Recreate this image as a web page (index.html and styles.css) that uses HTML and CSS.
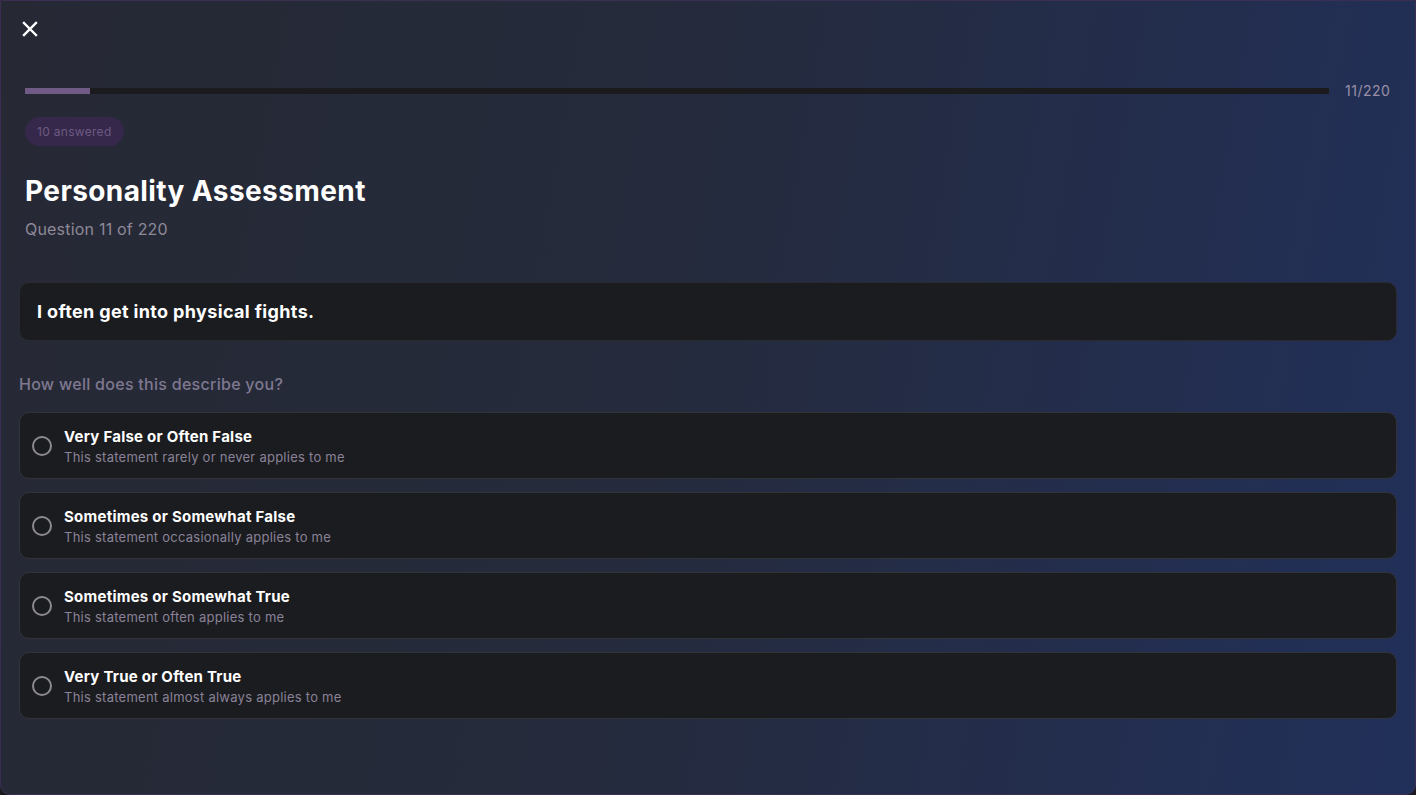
FILE: index.html
```html
<!DOCTYPE html>
<html lang="en">
<head>
<meta charset="utf-8">
<title>Personality Assessment</title>
<link rel="stylesheet" href="styles.css">
</head>
<body>
<div class="window">
  <button class="close" aria-label="Close">
    <svg width="16" height="16" viewBox="0 0 16 16"><path d="M2 2 L14 14 M14 2 L2 14" stroke="#ffffff" stroke-width="2.4" stroke-linecap="square" fill="none"/></svg>
  </button>
  <div class="content">
    <div class="progress-row">
      <div class="track"><div class="fill" style="width:5%"></div></div>
      <span class="count">11/220</span>
    </div>
    <span class="badge">10 answered</span>
    <h1 class="title">Personality Assessment</h1>
    <p class="subtitle">Question 11 of 220</p>
  </div>
  <div class="question">I often get into physical fights.</div>
  <p class="prompt">How well does this describe you?</p>
  <div class="options">
    <label class="option"><span class="radio"></span><span class="text"><span class="opt-title">Very False or Often False</span><span class="opt-desc">This statement rarely or never applies to me</span></span></label>
    <label class="option"><span class="radio"></span><span class="text"><span class="opt-title">Sometimes or Somewhat False</span><span class="opt-desc">This statement occasionally applies to me</span></span></label>
    <label class="option"><span class="radio"></span><span class="text"><span class="opt-title">Sometimes or Somewhat True</span><span class="opt-desc">This statement often applies to me</span></span></label>
    <label class="option"><span class="radio"></span><span class="text"><span class="opt-title">Very True or Often True</span><span class="opt-desc">This statement almost always applies to me</span></span></label>
  </div>
</div>
</body>
</html>
```
FILE: styles.css
```css
* { box-sizing: border-box; }
html, body { margin: 0; padding: 0; height: 100%; }
body {
  font-family: Inter, "Noto Sans", sans-serif;
  background: #1a1a1f;
}
.window {
  height: 795px;
  width: 1416px;
  border: 1px solid #3a2e52;
  border-radius: 0 0 10px 10px;
  background: linear-gradient(100deg, #262934 0%, #252b3c 45%, #232d4c 75%, #21305a 100%);
  padding: 18px 18px 0 18px;
  display: flex;
  flex-direction: column;
}
.close {
  width: 20px; height: 20px;
  padding: 0; margin: 0 0 0 1px;
  background: none; border: 0;
  display: flex; align-items: center; justify-content: center;
}
.content { padding: 0 6px; }
.progress-row {
  margin-top: 43px;
  display: flex;
  align-items: center;
  gap: 16px;
}
.track {
  flex: 1;
  height: 6px;
  background: #1b1b1e;
}
.fill { height: 100%; background: #6f5b85; }
.count {
  font-size: 14px;
  color: #9a8fa8;
  width: 46px;
  flex: none;
  letter-spacing: 0.5px;
}
.badge {
  display: inline-block;
  margin-top: 18px;
  height: 29px;
  line-height: 29px;
  padding: 0 12px;
  border-radius: 15px;
  background: #35284a;
  color: #6e5a84;
  font-size: 12px;
  letter-spacing: 0.3px;
}
.title {
  margin: 28px 0 0 0;
  font-size: 28px;
  font-weight: 700;
  color: #ffffff;
  line-height: 34px;
  letter-spacing: 0.4px;
}
.subtitle {
  margin: 11px 0 0 0;
  font-size: 16px;
  line-height: 20px;
  color: #8e8898;
  letter-spacing: 0.2px;
}
.question {
  margin-top: 43px;
  height: 59px;
  background: #1b1c1f;
  border: 1px solid #2a2b31;
  border-radius: 10px;
  padding: 0 17px;
  display: flex;
  align-items: center;
  font-size: 18px;
  font-weight: 700;
  color: #ffffff;
  letter-spacing: 0.35px;
}
.prompt {
  margin: 33px 0 0 0;
  font-size: 16px;
  font-weight: 500;
  line-height: 20px;
  color: #7f7890;
  letter-spacing: 0.28px;
}
.options {
  margin-top: 18px;
  display: flex;
  flex-direction: column;
  gap: 13px;
}
.option {
  height: 67px;
  background: #1b1c1f;
  border: 1px solid #33343a;
  border-radius: 10px;
  display: flex;
  align-items: center;
  padding: 0 12px;
  gap: 12px;
}
.radio {
  width: 20px; height: 20px;
  border: 2px solid #8c8a90;
  border-radius: 50%;
  flex: none;
}
.text { display: flex; flex-direction: column; gap: 3px; }
.opt-title {
  font-size: 15px;
  font-weight: 700;
  color: #ffffff;
  line-height: 19px;
  letter-spacing: 0.25px;
}
.opt-desc {
  font-size: 13px;
  color: #8a8298;
  line-height: 16px;
  letter-spacing: 0.25px;
}
```
